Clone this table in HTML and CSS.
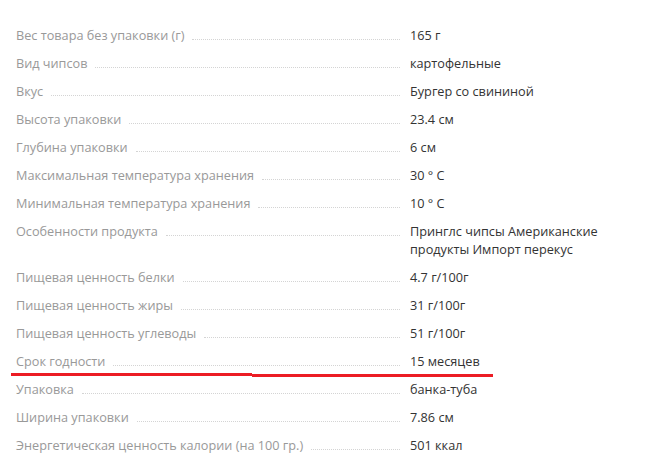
FILE: index.html
```html
<!DOCTYPE html>
<html lang="ru">
<head>
  <meta charset="UTF-8">
  <title>Характеристики</title>
  <link rel="stylesheet" href="styles.css">
</head>
<body>

  <div class="specs">
    <div class="spec-row">
      <div class="spec-name"><span>Вес товара без упаковки (г)</span><i class="dots"></i></div>
      <div class="spec-value">165 г</div>
    </div>
    <div class="spec-row">
      <div class="spec-name"><span>Вид чипсов</span><i class="dots"></i></div>
      <div class="spec-value">картофельные</div>
    </div>
    <div class="spec-row">
      <div class="spec-name"><span>Вкус</span><i class="dots"></i></div>
      <div class="spec-value">Бургер со свининой</div>
    </div>
    <div class="spec-row">
      <div class="spec-name"><span>Высота упаковки</span><i class="dots"></i></div>
      <div class="spec-value">23.4 см</div>
    </div>
    <div class="spec-row">
      <div class="spec-name"><span>Глубина упаковки</span><i class="dots"></i></div>
      <div class="spec-value">6 см</div>
    </div>
    <div class="spec-row">
      <div class="spec-name"><span>Максимальная температура хранения</span><i class="dots"></i></div>
      <div class="spec-value">30 ° C</div>
    </div>
    <div class="spec-row">
      <div class="spec-name"><span>Минимальная температура хранения</span><i class="dots"></i></div>
      <div class="spec-value">10 ° C</div>
    </div>
    <div class="spec-row">
      <div class="spec-name"><span>Особенности продукта</span><i class="dots"></i></div>
      <div class="spec-value">Принглс чипсы Американские продукты Импорт перекус</div>
    </div>
    <div class="spec-row">
      <div class="spec-name"><span>Пищевая ценность белки</span><i class="dots"></i></div>
      <div class="spec-value">4.7 г/100г</div>
    </div>
    <div class="spec-row">
      <div class="spec-name"><span>Пищевая ценность жиры</span><i class="dots"></i></div>
      <div class="spec-value">31 г/100г</div>
    </div>
    <div class="spec-row">
      <div class="spec-name"><span>Пищевая ценность углеводы</span><i class="dots"></i></div>
      <div class="spec-value">51 г/100г</div>
    </div>
    <div class="spec-row">
      <div class="spec-name"><span>Срок годности</span><i class="dots"></i></div>
      <div class="spec-value">15 месяцев</div>
    </div>
    <div class="spec-row">
      <div class="spec-name"><span>Упаковка</span><i class="dots"></i></div>
      <div class="spec-value">банка-туба</div>
    </div>
    <div class="spec-row">
      <div class="spec-name"><span>Ширина упаковки</span><i class="dots"></i></div>
      <div class="spec-value">7.86 см</div>
    </div>
    <div class="spec-row">
      <div class="spec-name"><span>Энергетическая ценность калории (на 100 гр.)</span><i class="dots"></i></div>
      <div class="spec-value">501 ккал</div>
    </div>
  </div>

  <!-- пометка красной линией -->
  <svg class="mark" width="659" height="462" viewBox="0 0 659 462">
    <path d="M11 374.5 H252" stroke="#ec1c24" stroke-width="3" fill="none"/>
    <path d="M252 375.5 H493" stroke="#ec1c24" stroke-width="3" fill="none"/>
  </svg>

</body>
</html>
```

FILE: styles.css
```css
body {
  margin: 0;
  background-color: #fff;
  font-family: "Open Sans", sans-serif;
  font-size: 12.7px;
  line-height: 18px;
}

.specs {
  padding: 21px 0 0 16px;
  display: flex;
  flex-direction: column;
}

.spec-row {
  display: flex;
  align-items: flex-start;
  padding: 5px 0;
}

.spec-name {
  width: 384px;
  height: 18px;
  display: flex;
  color: #999;
  white-space: nowrap;
}

.dots {
  flex: 1;
  margin: 0 0 4px 8px;
  border-bottom: 1px dotted #d4d4d4;
}

.spec-value {
  width: 200px;
  margin-left: 10px;
  color: #333;
}

.mark {
  position: absolute;
  top: 0;
  left: 0;
  pointer-events: none;
}
```
